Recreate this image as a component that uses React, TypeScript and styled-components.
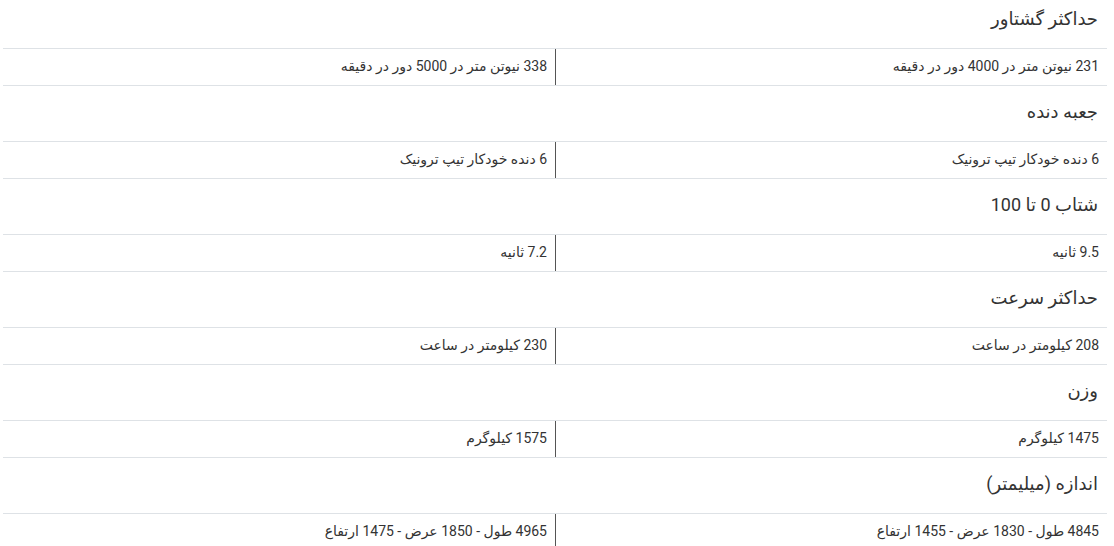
import { createGlobalStyle, styled } from "styled-components";

const specs = [
  {
    title: "حداکثر گشتاور",
    values: ["231 نیوتن متر در 4000 دور در دقیقه", "338 نیوتن متر در 5000 دور در دقیقه"],
  },
  { title: "جعبه دنده", values: ["6 دنده خودکار تیپ ترونیک", "6 دنده خودکار تیپ ترونیک"] },
  { title: "شتاب 0 تا 100", values: ["9.5 ثانیه", "7.2 ثانیه"] },
  { title: "حداکثر سرعت", values: ["208 کیلومتر در ساعت", "230 کیلومتر در ساعت"] },
  { title: "وزن", values: ["1475 کیلوگرم", "1575 کیلوگرم"] },
  {
    title: "اندازه (میلیمتر)",
    values: ["4845 طول - 1830 عرض - 1455 ارتفاع", "4965 طول - 1850 عرض - 1475 ارتفاع"],
  },
];

const App = () => {
  return (
    <>
      <GlobalStyle />
      <Page dir="rtl">
        <Table>
          {specs.map((spec) => (
            <Section key={spec.title}>
              <Title>{spec.title}</Title>
              <Row>
                {spec.values.map((v, i) => (
                  <Cell key={i} $first={i === 0}>
                    {v}
                  </Cell>
                ))}
              </Row>
            </Section>
          ))}
        </Table>
      </Page>
    </>
  );
};

export default App;

const GlobalStyle = createGlobalStyle`
  html, body {
    margin: 0;
    padding: 0;
    background: #fff;
    overflow: hidden;
  }
  body {
    font-family: Roboto, "DejaVu Sans", "Noto Sans", sans-serif;
    color: #212529;
  }
`;

const Page = styled.div`
  padding: 0 7px 0 3px;
`;

const Table = styled.div`
  margin-top: -7px;
  display: flex;
  flex-direction: column;
`;

const Section = styled.div`
  display: flex;
  flex-direction: column;
`;

const Title = styled.div`
  box-sizing: border-box;
  height: 56px;
  padding: 0 9px 4px 0;
  display: flex;
  align-items: center;
  font-size: 18px;
  color: #333;
  border-bottom: 1px solid #dee2e6;
`;

const Row = styled.div`
  display: grid;
  grid-template-columns: 1fr 1fr;
  border-bottom: 1px solid #dee2e6;
`;

const Cell = styled.div<{ $first: boolean }>`
  box-sizing: border-box;
  height: 36px;
  padding: 0 8px 3px 0;
  display: flex;
  align-items: center;
  font-size: 14px;
  color: #333;
  border-left: ${(p) => (p.$first ? "1px solid #555" : "none")};
`;
